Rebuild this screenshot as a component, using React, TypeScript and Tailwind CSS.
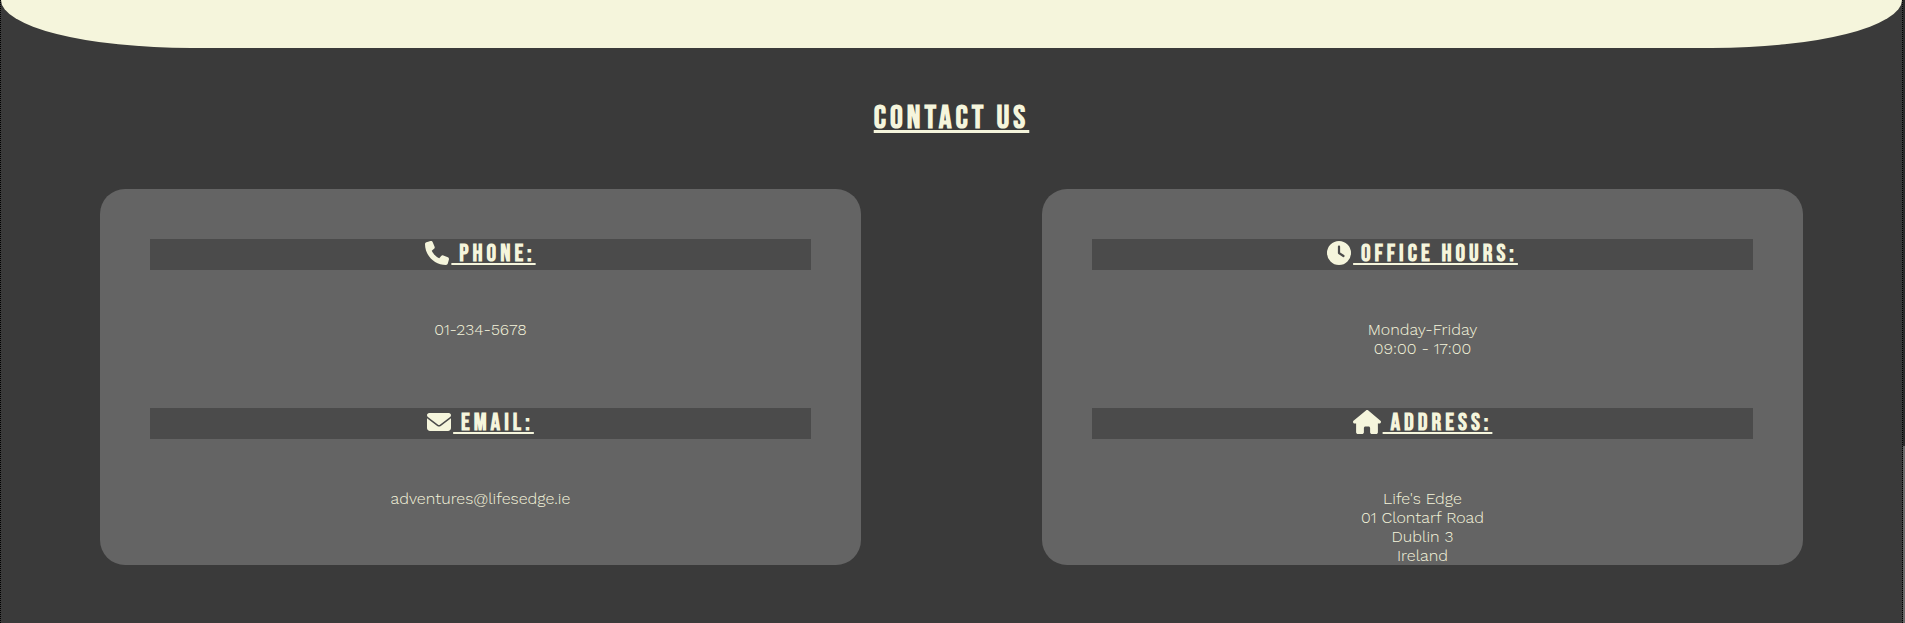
import type { ReactNode } from 'react';
import { FaClock, FaEnvelope, FaHouse, FaPhone } from 'react-icons/fa6';

function Detail({ icon, title, children }: { icon: ReactNode; title: string; children: ReactNode }) {
  return (
    <div>
      <h3 className="flex h-[31px] items-start justify-center gap-0.5 bg-[#4b4b4b] pt-0.5 font-['Bebas_Neue','Oswald','Roboto',sans-serif] text-2xl leading-[26px] font-bold tracking-[4px] uppercase">
        {icon}
        <span className="whitespace-pre underline decoration-2 underline-offset-2 [text-decoration-skip-ink:none]">{` ${title}`}</span>
      </h3>
      <div className="mt-[50px] min-h-[38px] text-center font-['Work_Sans','Inter',sans-serif] text-base leading-[19px] font-light">
        {children}
      </div>
    </div>
  );
}

function Card({ children }: { children: ReactNode }) {
  return <div className="flex flex-col gap-[50px] rounded-[25px] bg-[#646464] px-[50px] pt-[50px]">{children}</div>;
}

export default function App() {
  return (
    <div className="flex min-h-screen bg-[#3a3a3a] text-[#f5f5dc]">
      <main className="min-w-0 flex-1 border-x border-dotted border-black">
        <div className="h-12 rounded-[0_0_10%_10%/0_0_100%_100%] bg-[#f5f5dc]" />
        <section id="contact">
          <h2 className="mt-[51px] text-center font-['Bebas_Neue','Oswald','Roboto',sans-serif] text-[32px] leading-10 font-bold tracking-[4px] uppercase underline decoration-3 underline-offset-2">
            Contact Us
          </h2>
          <div className="mt-[50px] grid grid-cols-2 gap-[181px] px-[99px]">
            <Card>
              <Detail icon={<FaPhone className="size-6" aria-hidden="true" />} title="Phone:">
                <p>01-234-5678</p>
              </Detail>
              <Detail icon={<FaEnvelope className="size-6" aria-hidden="true" />} title="Email:">
                <p>adventures@lifesedge.ie</p>
              </Detail>
            </Card>
            <Card>
              <Detail icon={<FaClock className="size-6" aria-hidden="true" />} title="Office Hours:">
                <p>Monday-Friday</p>
                <p>09:00 - 17:00</p>
              </Detail>
              <Detail icon={<FaHouse className="h-6 w-7" preserveAspectRatio="none" aria-hidden="true" />} title="Address:">
                <address className="not-italic">
                  Life's Edge
                  <br />
                  01 Clontarf Road
                  <br />
                  Dublin 3
                  <br />
                  Ireland
                </address>
              </Detail>
            </Card>
          </div>
        </section>
      </main>
      <div className="flex w-0.5 flex-col bg-[#2b2b2b]" aria-hidden="true">
        <div className="mt-auto h-[177px] bg-[#686868]" />
      </div>
    </div>
  );
}
